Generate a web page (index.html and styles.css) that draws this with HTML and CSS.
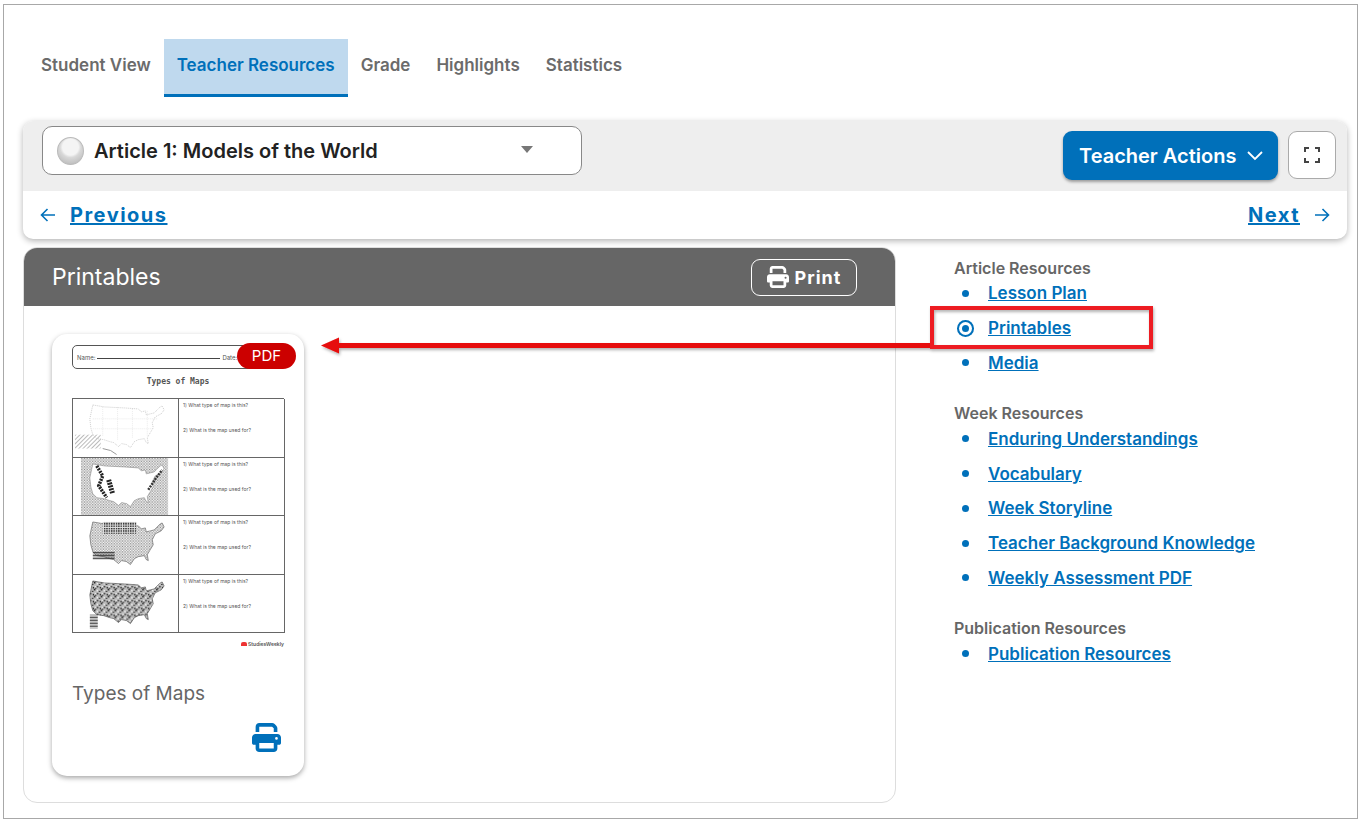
FILE: index.html
```html
<!DOCTYPE html>
<html lang="en">
<head>
    <meta charset="UTF-8">
    <title>Teacher Resources - Printables</title>
    <link rel="stylesheet" href="styles.css">
</head>
<body>
    <div class="frame">
        <!-- Tabs -->
        <div class="tabs">
            <a href="#" class="tab">Student View</a>
            <a href="#" class="tab active">Teacher Resources</a>
            <a href="#" class="tab">Grade</a>
            <a href="#" class="tab">Highlights</a>
            <a href="#" class="tab">Statistics</a>
        </div>

        <!-- Article toolbar -->
        <div class="toolbar">
            <div class="toolbar-top">
                <div class="article-select">
                    <span class="status-ball"></span>
                    <span class="article-name">Article 1: Models of the World</span>
                    <span class="caret"></span>
                </div>
                <div class="actions">
                    <button class="teacher-btn">Teacher Actions
                        <svg width="18" height="11" viewBox="0 0 18 11"><path d="M2 2l7 7 7-7" fill="none" stroke="#fff" stroke-width="1.8"/></svg>
                    </button>
                    <button class="fullscreen-btn">
                        <svg width="16" height="16" viewBox="0 0 16 16"><path d="M1 5V1h4M11 1h4v4M15 11v4h-4M5 15H1v-4" fill="none" stroke="#444" stroke-width="2"/></svg>
                    </button>
                </div>
            </div>
            <div class="toolbar-nav">
                <a href="#" class="nav-link">
                    <svg width="16" height="14" viewBox="0 0 16 14"><path d="M15 7H2M7.500 1L1.500 7l6 6" fill="none" stroke="#0070ba" stroke-width="1.600"/></svg>
                    <span>Previous</span>
                </a>
                <a href="#" class="nav-link">
                    <span>Next</span>
                    <svg width="16" height="14" viewBox="0 0 16 14"><path d="M1 7h13M8.500 1l6 6-6 6" fill="none" stroke="#0070ba" stroke-width="1.600"/></svg>
                </a>
            </div>
        </div>

        <div class="main">
            <!-- Printables panel -->
            <div class="panel">
                <div class="panel-head">
                    <div class="panel-title">Printables</div>
                    <button class="print-btn">
                        <svg width="22" height="22" viewBox="0 0 512 512"><path fill="#fff" d="M128 0C92.700 0 64 28.700 64 64v96h64V64H354.700L384 93.300V160h64V93.300c0-17-6.700-33.300-18.700-45.300L400 18.700C388 6.700 371.700 0 354.700 0H128zM384 352v96H128V352H384zm64 32h32c17.700 0 32-14.300 32-32V256c0-35.300-28.700-64-64-64H64c-35.300 0-64 28.700-64 64v96c0 17.700 14.300 32 32 32H64v64c0 35.300 28.700 64 64 64H384c35.300 0 64-28.700 64-64V384zM432 248a24 24 0 1 1 0 48 24 24 0 1 1 0-48z"/></svg>
                        Print
                    </button>
                </div>
                <div class="panel-body">
                    <div class="card">
                        <span class="badge">PDF</span>
                        <div class="sheet">
                            <div class="sheet-name">
                                <span>Name:</span><span class="sheet-line"></span><span>Date:</span>
                            </div>
                            <div class="sheet-title">Types of Maps</div>
                            <div class="sheet-table">
                                <div class="sheet-map">
                                    <svg viewBox="0 0 106 58" class="map-svg">
                                        <use href="#usa" fill="#fff" stroke="#999" stroke-width=".5" stroke-dasharray="1 1"/>
                                        <path d="M30 8v30M45 8v34M60 10v30M75 12v26M20 20h65M20 30h60" stroke="#ccc" stroke-width=".4" fill="none" stroke-dasharray="1 1"/>
                                        <rect x="2" y="36" width="26" height="14" fill="url(#hatch)"/>
                                        <path d="M30 50l8 2 6 4" stroke="#999" fill="none"/>
                                    </svg>
                                </div>
                                <div class="sheet-qs"><p>1) What type of map is this?</p><p>2) What is the map used for?</p></div>
                                <div class="sheet-map">
                                    <svg viewBox="0 0 106 58" class="map-svg">
                                        <rect x="8" y="0" width="88" height="58" fill="url(#dots)"/>
                                        <use href="#usa" fill="#fff" stroke="#777" stroke-width=".5"/>
                                        <path d="M24 8l6 10-4 10 8 12" stroke="#222" stroke-width="3.500" fill="none" stroke-dasharray="2 1"/>
                                        <path d="M36 22l4 14" stroke="#222" stroke-width="5" fill="none" stroke-dasharray="2 1"/>
                                        <path d="M76 32l8-12 6-8" stroke="#333" stroke-width="2.500" fill="none" stroke-dasharray="2 1"/>
                                    </svg>
                                </div>
                                <div class="sheet-qs"><p>1) What type of map is this?</p><p>2) What is the map used for?</p></div>
                                <div class="sheet-map">
                                    <svg viewBox="0 0 106 58" class="map-svg">
                                        <use href="#usa" fill="url(#dots)" stroke="#555" stroke-width=".6"/>
                                        <rect x="30" y="6" width="34" height="12" fill="url(#grid)"/>
                                        <rect x="20" y="36" width="22" height="8" fill="url(#stripes)"/>
                                    </svg>
                                </div>
                                <div class="sheet-qs"><p>1) What type of map is this?</p><p>2) What is the map used for?</p></div>
                                <div class="sheet-map">
                                    <svg viewBox="0 0 106 58" class="map-svg">
                                        <use href="#usa" fill="url(#speckle)" stroke="#444" stroke-width=".6"/>
                                        <rect x="17" y="40" width="8" height="14" fill="url(#stripes)"/>
                                    </svg>
                                </div>
                                <div class="sheet-qs"><p>1) What type of map is this?</p><p>2) What is the map used for?</p></div>
                            </div>
                            <div class="sheet-logo"><span class="logo-mark"></span>StudiesWeekly</div>
                        </div>
                        <div class="card-title">Types of Maps</div>
                        <div class="card-foot">
                            <svg width="29" height="29" viewBox="0 0 512 512"><path fill="#0070ba" d="M128 0C92.700 0 64 28.700 64 64v96h64V64H354.700L384 93.300V160h64V93.300c0-17-6.700-33.300-18.700-45.300L400 18.700C388 6.700 371.700 0 354.700 0H128zM384 352v96H128V352H384zm64 32h32c17.700 0 32-14.300 32-32V256c0-35.300-28.700-64-64-64H64c-35.300 0-64 28.700-64 64v96c0 17.700 14.300 32 32 32H64v64c0 35.300 28.700 64 64 64H384c35.300 0 64-28.700 64-64V384zM432 248a24 24 0 1 1 0 48 24 24 0 1 1 0-48z"/></svg>
                        </div>
                    </div>
                </div>
            </div>

            <!-- Resource links -->
            <div class="sidebar">
                <div class="res-title">Article Resources</div>
                <ul class="res-list">
                    <li><a href="#">Lesson Plan</a></li>
                    <li class="current"><a href="#">Printables</a></li>
                    <li><a href="#">Media</a></li>
                </ul>
                <div class="res-title">Week Resources</div>
                <ul class="res-list">
                    <li><a href="#">Enduring Understandings</a></li>
                    <li><a href="#">Vocabulary</a></li>
                    <li><a href="#">Week Storyline</a></li>
                    <li><a href="#">Teacher Background Knowledge</a></li>
                    <li><a href="#">Weekly Assessment PDF</a></li>
                </ul>
                <div class="res-title">Publication Resources</div>
                <ul class="res-list">
                    <li><a href="#">Publication Resources</a></li>
                </ul>
            </div>
        </div>
    </div>

    <!-- Red callout drawn over the page -->
    <svg class="callout" width="1363" height="821" viewBox="0 0 1363 821">
        <defs>
            <filter id="soft" x="-5%" y="-20%" width="110%" height="140%"><feDropShadow dx="1" dy="2" stdDeviation="1.500" flood-color="#000" flood-opacity=".3"/></filter>
        </defs>
        <g filter="url(#soft)">
            <path d="M337 345.500H934" stroke="#e60a0a" stroke-width="5" fill="none"/>
            <path d="M321 345.500l18-8v16z" fill="#e60a0a"/>
            <rect x="932" y="308" width="219" height="39" fill="none" stroke="#ed1c24" stroke-width="4"/>
        </g>
    </svg>

    <!-- Shared map shapes -->
    <svg class="defs" width="0" height="0">
        <defs>
            <pattern id="dots" width="1.600" height="1.600" patternUnits="userSpaceOnUse"><rect width="1.600" height="1.600" fill="#fff"/><rect width=".8" height=".8" fill="#888"/><rect x=".8" y=".8" width=".8" height=".8" fill="#aaa"/></pattern>
            <pattern id="hatch" width="3" height="3" patternUnits="userSpaceOnUse" patternTransform="rotate(45)"><rect width="1" height="3" fill="#bbb"/></pattern>
            <pattern id="grid" width="2.400" height="2.400" patternUnits="userSpaceOnUse"><rect width="2.400" height="2.400" fill="#ddd"/><rect width="1.400" height="1.400" fill="#222"/></pattern>
            <pattern id="stripes" width="3" height="3" patternUnits="userSpaceOnUse"><rect width="3" height="1.500" fill="#333"/></pattern>
            <pattern id="speckle" width="7" height="7" patternUnits="userSpaceOnUse"><rect width="7" height="7" fill="#bbb"/><rect width="1.500" height="1.500" fill="#111"/><rect x="3" y="1" width="1" height="1.500" fill="#fff"/><rect x="5" y="2" width="1.500" height="1" fill="#222"/><rect x="1" y="4" width="1" height="1" fill="#fff"/><rect x="3" y="4" width="1.500" height="1.500" fill="#333"/><rect x="6" y="5" width="1" height="1.500" fill="#000"/><rect x="1" y="6" width="1.500" height="1" fill="#444"/></pattern>
            <path id="usa" d="M20 6l12 2 20 1 14 1 3 3 4-1 1 4 4-1 4-1 6-6 2-1 2 4-3 4-6 3-3 6 1 5-3 5-3 5 1 6-2-1-2-4-6 1-4 2-4 6-4-3-5-1-3 3-5-4-4-1-6-2-7-1-4-4-2-7-1-9z"/>
        </defs>
    </svg>
</body>
</html>
```

FILE: styles.css
```css
/* General styles */
* {
    margin: 0;
    padding: 0;
    box-sizing: border-box;
}

body {
    position: relative;
    width: 1363px;
    height: 821px;
    overflow: hidden;
    font-family: Inter, "Open Sans", sans-serif;
    background: #fff;
    color: #666;
}

a {
    color: #0070ba;
}

button {
    font-family: inherit;
    cursor: pointer;
}

.frame {
    width: 1355px;
    height: 815px;
    margin: 4px 0 0 3px;
    padding: 34px 10px 0 19px;
    border: 1px solid #a8a8a8;
}

/* Tabs */
.tabs {
    display: flex;
    height: 58px;
    margin-left: 5px;
    margin-bottom: 24px;
}

.tab {
    display: flex;
    align-items: center;
    padding: 0 13px 3px;
    font-size: 17px;
    font-weight: 600;
    color: #6b6b6b;
    text-decoration: none;
    border-bottom: 3px solid transparent;
}

.tab.active {
    background: #bfd9ee;
    color: #0070ba;
    border-bottom-color: #0070ba;
}

/* Toolbar */
.toolbar {
    height: 118px;
    margin-bottom: 8px;
    border-radius: 10px;
    background: #fff;
    box-shadow: 0 2px 6px rgba(0, 0, 0, 0.3);
    overflow: hidden;
}

.toolbar-top {
    display: flex;
    justify-content: space-between;
    height: 70px;
    padding: 5px 11px 0 19px;
    background: #eee;
}

.article-select {
    display: flex;
    align-items: center;
    width: 540px;
    height: 49px;
    padding: 0 48px 0 14px;
    background: #fff;
    border: 1px solid #888;
    border-radius: 10px;
}

.status-ball {
    width: 27px;
    height: 28px;
    border-radius: 50%;
    background: radial-gradient(circle at 50% 35%, #f4f4f4 0 38%, #d8d8d8 50%, #b0b0b0 100%);
    border: 1px solid #bbb;
}

.article-name {
    flex: 1;
    margin-left: 10px;
    font-size: 20px;
    font-weight: 600;
    color: #222;
}

.caret {
    width: 0;
    height: 0;
    border-left: 6px solid transparent;
    border-right: 6px solid transparent;
    border-top: 7px solid #777;
    margin-bottom: 3px;
}

.actions {
    display: flex;
    gap: 10px;
    padding-top: 5px;
}

.teacher-btn {
    display: flex;
    align-items: center;
    gap: 10px;
    width: 215px;
    height: 49px;
    padding-left: 16px;
    color: #fff;
    font-size: 20px;
    font-weight: 600;
    background: #0070ba;
    border: none;
    border-radius: 9px;
    box-shadow: 0 2px 3px rgba(0, 0, 0, 0.35);
}

.fullscreen-btn {
    display: flex;
    align-items: center;
    justify-content: center;
    width: 48px;
    height: 48px;
    background: #fff;
    border: 1px solid #aaa;
    border-radius: 9px;
}

.toolbar-nav {
    display: flex;
    justify-content: space-between;
    align-items: center;
    height: 48px;
    padding: 0 17px;
}

.nav-link {
    display: flex;
    align-items: center;
    gap: 14px;
    font-size: 20px;
    font-weight: 700;
    letter-spacing: 1.5px;
    text-decoration: none;
}

.nav-link span {
    text-decoration: underline;
}

/* Printables panel */
.main {
    display: flex;
}

.panel {
    width: 873px;
    height: 556px;
    border: 1px solid #ddd;
    border-radius: 14px;
    overflow: hidden;
}

.panel-head {
    display: flex;
    justify-content: space-between;
    align-items: center;
    height: 58px;
    padding: 0 38px 0 28px;
    background: #666;
}

.panel-title {
    font-size: 23px;
    color: #fff;
}

.print-btn {
    display: flex;
    align-items: center;
    justify-content: center;
    gap: 6px;
    width: 106px;
    height: 37px;
    color: #fff;
    font-size: 18px;
    font-weight: 700;
    letter-spacing: 1px;
    background: transparent;
    border: 1px solid #fff;
    border-radius: 9px;
}

.panel-body {
    padding: 28px;
}

.card {
    position: relative;
    width: 252px;
    height: 442px;
    padding: 11px 20px 0;
    background: #fff;
    border-radius: 15px;
    box-shadow: 0 2px 5px rgba(0, 0, 0, 0.35);
}

.badge {
    position: absolute;
    top: 9px;
    right: 8px;
    width: 59px;
    height: 26px;
    font-size: 15px;
    line-height: 26px;
    text-align: center;
    color: #fff;
    background: #cc0000;
    border-radius: 13px;
}

/* Worksheet thumbnail */
.sheet {
    height: 307px;
    color: #555;
}

.sheet-name {
    display: flex;
    align-items: center;
    gap: 2px;
    height: 24px;
    padding: 0 4px;
    font-size: 6px;
    border: 1px solid #555;
    border-radius: 5px;
}

.sheet-line {
    width: 123px;
    height: 1px;
    margin-top: 3px;
    background: #444;
}

.sheet-title {
    margin: 7px 0 10px;
    font-family: "DejaVu Sans Mono", monospace;
    font-size: 8px;
    line-height: 12px;
    font-weight: 700;
    text-align: center;
}

.sheet-table {
    display: grid;
    grid-template-columns: 106px 106px;
    grid-auto-rows: 58.5px;
    border-top: 1px solid #666;
    border-left: 1px solid #666;
}

.sheet-map,
.sheet-qs {
    border-right: 1px solid #666;
    border-bottom: 1px solid #666;
}

.map-svg {
    display: block;
    width: 100%;
    height: 100%;
}

.sheet-qs {
    padding: 3px 0 0 4px;
    font-size: 5px;
    line-height: 7px;
    white-space: nowrap;
}

.sheet-qs p:first-child {
    margin-bottom: 18px;
}

.sheet-logo {
    display: flex;
    justify-content: flex-end;
    align-items: center;
    gap: 1px;
    margin-top: 8px;
    font-size: 5px;
    font-weight: 600;
}

.logo-mark {
    width: 6px;
    height: 4px;
    background: #e33;
    border-radius: 2px 2px 0 0;
}

.card-title {
    margin-top: 30px;
    font-size: 19px;
    color: #666;
}

.card-foot {
    display: flex;
    justify-content: flex-end;
    margin-top: 18px;
    margin-right: 3px;
}

/* Sidebar */
.sidebar {
    margin-left: 58px;
    padding-top: 13px;
}

.res-title {
    font-size: 16px;
    line-height: 16px;
    font-weight: 600;
    color: #666;
}

.res-list {
    list-style: none;
    margin-bottom: 25px;
}

.res-list li {
    display: flex;
    align-items: center;
    height: 34.8px;
    font-size: 17px;
    font-weight: 600;
}

.res-list li::before {
    content: "";
    width: 7px;
    height: 7px;
    margin: 0 19px 0 8px;
    border-radius: 50%;
    background: #0070ba;
}

.res-list li.current::before {
    box-shadow: 0 0 0 3px #fff, 0 0 0 5px #0070ba;
}

/* Annotation */
.callout {
    position: absolute;
    top: 0;
    left: 0;
    pointer-events: none;
}

.defs {
    position: absolute;
}
```
